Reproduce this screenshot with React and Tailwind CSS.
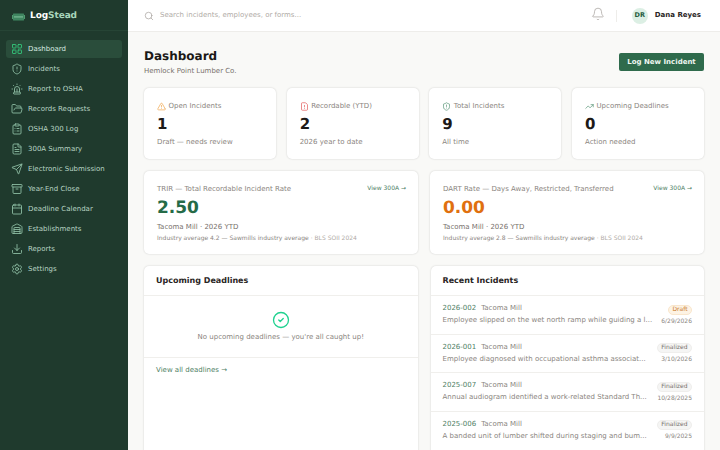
import React from 'react';
import {
  LayoutGrid, ShieldAlert, Siren, FolderOpen, ClipboardList, FileText, Send, Archive,
  Calendar, Warehouse, Download, Settings, Search, Bell, TriangleAlert, FileWarning,
  TrendingUp, CircleCheck,
} from 'lucide-react';

const navItems = [
  { label: 'Dashboard', icon: LayoutGrid, active: true },
  { label: 'Incidents', icon: ShieldAlert },
  { label: 'Report to OSHA', icon: Siren },
  { label: 'Records Requests', icon: FolderOpen },
  { label: 'OSHA 300 Log', icon: ClipboardList },
  { label: '300A Summary', icon: FileText },
  { label: 'Electronic Submission', icon: Send },
  { label: 'Year-End Close', icon: Archive },
  { label: 'Deadline Calendar', icon: Calendar },
  { label: 'Establishments', icon: Warehouse },
  { label: 'Reports', icon: Download },
  { label: 'Settings', icon: Settings },
];

const stats = [
  { label: 'Open Incidents', value: '1', note: 'Draft — needs review', icon: TriangleAlert, color: 'text-[#f0a040]' },
  { label: 'Recordable (YTD)', value: '2', note: '2026 year to date', icon: FileWarning, color: 'text-[#e05050]' },
  { label: 'Total Incidents', value: '9', note: 'All time', icon: ShieldAlert, color: 'text-[#4f8f6f]' },
  { label: 'Upcoming Deadlines', value: '0', note: 'Action needed', icon: TrendingUp, color: 'text-[#4f8f6f]' },
];

const rates = [
  { label: 'TRIR — Total Recordable Incident Rate', value: '2.50', color: 'text-[#256b47]', avg: 'Industry average 4.2 — Sawmills industry average' },
  { label: 'DART Rate — Days Away, Restricted, Transferred', value: '0.00', color: 'text-[#e0700f]', avg: 'Industry average 2.8 — Sawmills industry average' },
];

const incidents = [
  { id: '2026-002', text: 'Employee slipped on the wet north ramp while guiding a l...', status: 'Draft', date: '6/29/2026' },
  { id: '2026-001', text: 'Employee diagnosed with occupational asthma associat...', status: 'Finalized', date: '3/10/2026' },
  { id: '2025-007', text: 'Annual audiogram identified a work-related Standard Th...', status: 'Finalized', date: '10/28/2025' },
  { id: '2025-006', text: 'A banded unit of lumber shifted during staging and bum...', status: 'Finalized', date: '9/9/2025' },
];

const Logo = () => (
  <svg width="13" height="8" viewBox="0 0 13 8" className="shrink-0">
    <rect x="0" y="2" width="13" height="4" fill="#4f9a70" />
    <rect x="1" y="0.5" width="11" height="7" rx="0.5" fill="#3f8560" />
    <rect x="2" y="3.2" width="9" height="1.4" fill="#6fb38d" />
  </svg>
);

const Sidebar = () => (
  <aside className="w-[128px] shrink-0 bg-[#1f3a2d] flex flex-col">
    <div className="h-[31px] flex items-center gap-[5px] pl-[12px] pt-[3px] border-b border-[#264435]">
      <Logo />
      <span className="text-[9px] tracking-[-0.1px] font-bold text-white">Log<span className="text-[#a8d5bb]">Stead</span></span>
    </div>
    <nav className="flex flex-col gap-[2px] pt-[9px] px-[6px]">
      {navItems.map((item) => (
        <div
          key={item.label}
          className={`h-[18px] flex items-center gap-[5px] pl-[5px] rounded-[3px] text-[7px] ${item.active ? 'bg-[#2a4d3b] text-[#d8ebe0]' : 'text-[#b8d4c4]'}`}
        >
          <item.icon size={12} strokeWidth={1.75} className={item.active ? 'text-[#34c77b]' : 'text-[#8fbfa5]'} />
          <span>{item.label}</span>
        </div>
      ))}
    </nav>
  </aside>
);

const Topbar = () => (
  <header className="h-[32px] shrink-0 bg-white border-b border-[#eeedea] flex items-center pl-[16px] pr-[16px]">
    <Search size={10} strokeWidth={1.75} className="text-[#a8a29e]" />
    <span className="ml-[6px] text-[7px] text-[#b0aba6]">Search incidents, employees, or forms...</span>
    <Bell size={14} strokeWidth={1.3} className="ml-auto text-[#a8a29e] mb-[3px]" />
    <div className="w-px h-[12px] bg-[#eeedea] ml-[11px] mr-[15px]" />
    <div className="w-[16px] h-[16px] rounded-full bg-[#dcefe4] flex items-center justify-center text-[6.5px] font-bold text-[#245c3f]">DR</div>
    <span className="ml-[7px] mr-[3px] text-[7px] font-bold text-[#292524]">Dana Reyes</span>
  </header>
);

const StatCard = ({ stat }) => (
  <div className="h-[71px] bg-white rounded-[5px] shadow-[0_0_2px_rgba(0,0,0,0.18)] px-[13px] pt-[13px]">
    <div className="flex items-center gap-[2.5px] text-[7px] leading-[10px] text-[#8a8580]">
      <stat.icon size={9} strokeWidth={1.75} className={stat.color} />
      <span>{stat.label}</span>
    </div>
    <div className="mt-[4px] text-[15px] leading-[18px] font-bold text-[#1c1917]">{stat.value}</div>
    <div className="mt-[4px] text-[7px] leading-[10px] text-[#8a8580]">{stat.note}</div>
  </div>
);

const RateCard = ({ rate }) => (
  <div className="h-[83px] bg-white rounded-[5px] shadow-[0_0_2px_rgba(0,0,0,0.18)] pl-[13px] pr-[12px] pt-[13px]">
    <div className="flex items-center justify-between text-[7px] leading-[10px] text-[#8a8580]">
      <span>{rate.label}</span>
      <span className="text-[6px] text-[#4f7f66]">View 300A →</span>
    </div>
    <div className={`mt-[2px] text-[17px] leading-[24px] font-bold ${rate.color}`}>{rate.value}</div>
    <div className="mt-[2px] text-[7px] leading-[10px] text-[#78716c]">Tacoma Mill · 2026 YTD</div>
    <div className="mt-[2px] text-[6px] leading-[9px] text-[#8a8580]">
      {rate.avg} <span className="text-[#b0aba6]">· BLS SOII 2024</span>
    </div>
  </div>
);

const IncidentRow = ({ row }) => (
  <div className="h-[38.5px] border-t border-[#f0efec] px-[12px] flex justify-between">
    <div className="pt-[7px] min-w-0">
      <div className="text-[7px] leading-[10px]">
        <span className="text-[#4f7f66]">{row.id}</span>
        <span className="ml-[5px] text-[#8a8580]">Tacoma Mill</span>
      </div>
      <div className="mt-[2px] text-[7px] leading-[10px] text-[#8a8580] whitespace-nowrap">{row.text}</div>
    </div>
    <div className="pt-[8.5px] flex flex-col items-end">
      {row.status === 'Draft' ? (
        <span className="h-[10px] px-[3.5px] rounded-full bg-[#fdf3e4] border border-[#f9e6cc] text-[6px] leading-[8px] text-[#c97a2b]">Draft</span>
      ) : (
        <span className="h-[10px] px-[3.5px] rounded-full bg-[#f5f5f4] border border-[#efeeec] text-[6px] leading-[8px] text-[#78716c]">Finalized</span>
      )}
      <span className="mt-[2px] text-[6px] leading-[9px] text-[#8a8580]">{row.date}</span>
    </div>
  </div>
);

export default function App() {
  return (
    <div className="w-[720px] h-[450px] overflow-hidden flex bg-[#f9f9f7] font-['DejaVu_Sans',sans-serif] [text-rendering:geometricPrecision]">
      <Sidebar />
      <div className="flex-1 min-w-0 flex flex-col">
        <Topbar />
        <main className="flex-1 min-h-0 overflow-hidden px-[16px] pt-[16px]">
          <div className="flex items-start justify-between h-[40px]">
            <div>
              <h1 className="text-[12px] leading-[16px] font-bold text-[#1c1917]">Dashboard</h1>
              <p className="mt-[2px] text-[7px] leading-[10px] text-[#78716c]">Hemlock Point Lumber Co.</p>
            </div>
            <button className="mt-[5px] h-[18px] w-[85px] rounded-[2px] bg-[#2f6b4c] text-[7px] font-bold text-[#eef6f1]">Log New Incident</button>
          </div>
          <div className="grid grid-cols-4 gap-[10.67px]">
            {stats.map((s) => <StatCard key={s.label} stat={s} />)}
          </div>
          <div className="grid grid-cols-2 gap-[12px] mt-[12px]">
            {rates.map((r) => <RateCard key={r.label} rate={r} />)}
          </div>
          <div className="grid grid-cols-2 gap-[13px] mt-[12px]">
            <section className="h-[200px] bg-white rounded-[5px] shadow-[0_0_2px_rgba(0,0,0,0.18)]">
              <h2 className="h-[29px] px-[12px] flex items-center text-[8px] font-bold text-[#292524]">Upcoming Deadlines</h2>
              <div className="h-[62.5px] border-y border-[#f0efec] flex flex-col items-center pt-[15px]">
                <CircleCheck size={18} strokeWidth={1.75} className="text-[#1fd18f]" />
                <p className="mt-[3px] text-[7px] leading-[10px] text-[#8a8580]">No upcoming deadlines — you're all caught up!</p>
              </div>
              <div className="px-[12px] pt-[7.5px] text-[7px] leading-[10px] text-[#4f7f66]">View all deadlines →</div>
            </section>
            <section className="h-[200px] bg-white rounded-[5px] shadow-[0_0_2px_rgba(0,0,0,0.18)]">
              <h2 className="h-[29px] px-[12px] flex items-center text-[8px] font-bold text-[#292524]">Recent Incidents</h2>
              {incidents.map((row) => <IncidentRow key={row.id} row={row} />)}
            </section>
          </div>
        </main>
      </div>
    </div>
  );
}
